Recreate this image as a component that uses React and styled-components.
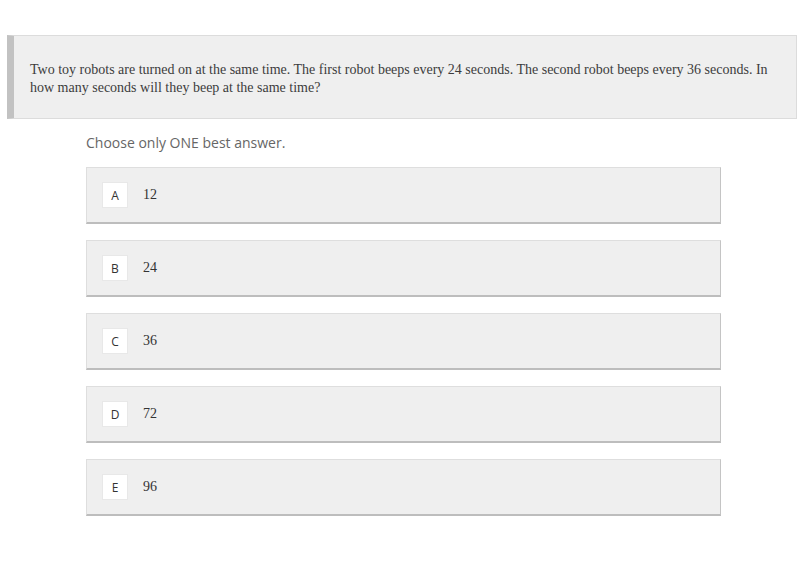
import React from "react";
import styled, { createGlobalStyle } from "styled-components";

const Global = createGlobalStyle`
  html, body { margin: 0; padding: 0; background: #fff; }
  body { font-family: "Open Sans", "Liberation Sans", sans-serif; }
`;

const Page = styled.div`
  padding: 35px 4px 40px 7px;
`;

const Question = styled.div`
  width: 790px;
  box-sizing: border-box;
  background: #efefef;
  border: 1px solid #dcdcdc;
  border-left: 7px solid #c2c2c2;
  padding: 25px 16px 21px 16px;
  font-family: "Liberation Serif", "Times New Roman", serif;
  font-size: 14px;
  line-height: 18px;
  color: #3c3c3c;
`;

const Body = styled.div`
  margin-left: 79px;
  width: 635px;
`;

const Instruction = styled.div`
  margin-top: 14px;
  font-family: "Open Sans", sans-serif;
  font-size: 14px;
  line-height: 20px;
  color: #666;
`;

const Options = styled.div`
  margin-top: 14px;
  display: flex;
  flex-direction: column;
  gap: 16px;
`;

const Option = styled.div`
  height: 57px;
  box-sizing: border-box;
  display: flex;
  align-items: center;
  padding-left: 15px;
  background: #efefef;
  border: 1px solid #dedede;
  border-right-color: #c4c4c4;
  border-bottom: 2px solid #bdbdbd;
`;

const Letter = styled.div`
  width: 26px;
  height: 26px;
  display: flex;
  align-items: center;
  justify-content: center;
  background: #fff;
  border: 1px solid #e8e8e8;
  box-sizing: border-box;
  font-family: "Open Sans", sans-serif;
  font-size: 12px;
  color: #333;
`;

const Value = styled.div`
  margin-left: 15px;
  font-family: "Liberation Serif", "Times New Roman", serif;
  font-size: 14px;
  color: #333;
`;

const options = [
  ["A", "12"],
  ["B", "24"],
  ["C", "36"],
  ["D", "72"],
  ["E", "96"],
];

export default function App() {
  return (
    <>
      <Global />
      <Page>
        <Question>
          Two toy robots are turned on at the same time. The first robot beeps every 24 seconds. The second robot beeps every 36 seconds. In how many seconds will they beep at the same time?
        </Question>
        <Body>
          <Instruction>Choose only ONE best answer.</Instruction>
          <Options>
            {options.map(([l, v]) => (
              <Option key={l}>
                <Letter>{l}</Letter>
                <Value>{v}</Value>
              </Option>
            ))}
          </Options>
        </Body>
      </Page>
    </>
  );
}
